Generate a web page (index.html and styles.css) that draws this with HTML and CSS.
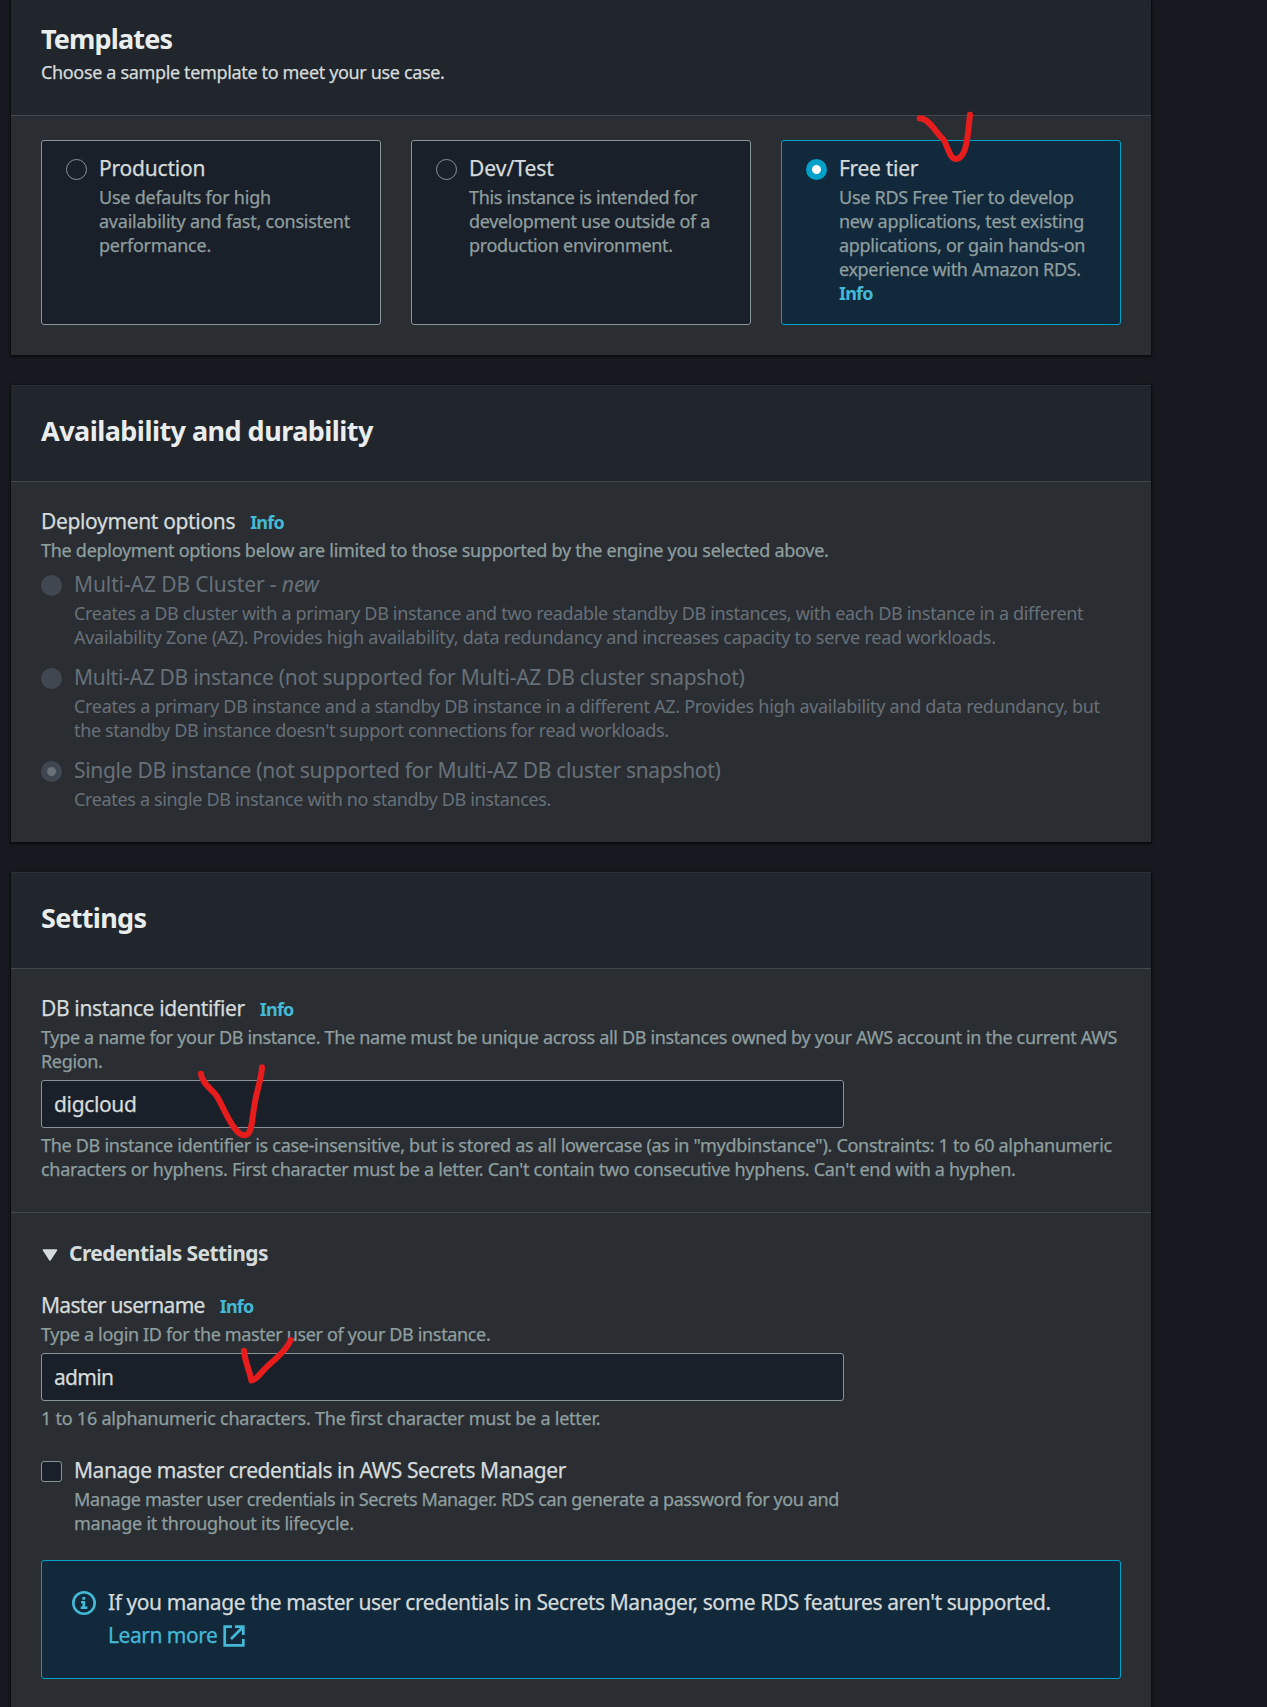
FILE: index.html
```html
<!DOCTYPE html>
<html lang="en">
<head>
<meta charset="utf-8">
<title>Create database</title>
<link rel="stylesheet" href="styles.css">
</head>
<body>
<main class="page">
  <section class="panel panel-first">
    <header class="panel-header">
      <h2 class="t84">Templates</h2>
      <p class="panel-sub t35">Choose a sample template to meet your use case.</p>
    </header>
    <div class="panel-body cards">
      <label class="card">
        <span class="radio"></span>
        <span class="option-text">
          <span class="label t20">Production</span>
          <span class="hint t24">Use defaults for high<br>availability and fast, consistent<br>performance.</span>
        </span>
      </label>
      <label class="card">
        <span class="radio"></span>
        <span class="option-text">
          <span class="label">Dev/Test</span>
          <span class="hint t33">This instance is intended for<br>development use outside of a<br>production environment.</span>
        </span>
      </label>
      <label class="card card-selected">
        <span class="radio radio-on"></span>
        <span class="option-text">
          <span class="label t31">Free tier</span>
          <span class="hint"><span class="t28">Use RDS Free Tier to develop</span><br><span class="t28">new applications, test existing</span><br><span class="t33">applications, or gain hands-on</span><br><span class="t35">experience with Amazon RDS.</span><br><a class="info">Info</a></span>
        </span>
      </label>
    </div>
  </section>

  <section class="panel">
    <header class="panel-header"><h2 class="t54">Availability and durability</h2></header>
    <div class="panel-body">
      <div class="field-head"><span class="label t35">Deployment options</span><a class="info">Info</a></div>
      <p class="hint field-hint t28">The deployment options below are limited to those supported by the engine you selected above.</p>
      <div class="options">
        <label class="option">
          <span class="radio radio-disabled"></span>
          <span class="option-text">
            <span class="label t10">Multi-AZ DB Cluster - <em>new</em></span>
            <span class="hint"><span class="t325">Creates a DB cluster with a primary DB instance and two readable standby DB instances, with each DB instance in a different</span><br><span class="t26">Availability Zone (AZ). Provides high availability, data redundancy and increases capacity to serve read workloads.</span></span>
          </span>
        </label>
        <label class="option">
          <span class="radio radio-disabled"></span>
          <span class="option-text">
            <span class="label t28">Multi-AZ DB instance (not supported for Multi-AZ DB cluster snapshot)</span>
            <span class="hint"><span class="t305">Creates a primary DB instance and a standby DB instance in a different AZ. Provides high availability and data redundancy, but</span><br><span class="t35">the standby DB instance doesn't support connections for read workloads.</span></span>
          </span>
        </label>
        <label class="option">
          <span class="radio radio-disabled radio-disabled-on"></span>
          <span class="option-text">
            <span class="label t31">Single DB instance (not supported for Multi-AZ DB cluster snapshot)</span>
            <span class="hint t35">Creates a single DB instance with no standby DB instances.</span>
          </span>
        </label>
      </div>
    </div>
  </section>

  <section class="panel">
    <header class="panel-header"><h2 class="t66">Settings</h2></header>
    <div class="panel-body">
      <div class="field-head"><span class="label t37">DB instance identifier</span><a class="info">Info</a></div>
      <p class="hint field-hint t335">Type a name for your DB instance. The name must be unique across all DB instances owned by your AWS account in the current AWS<br>Region.</p>
      <input class="input t35" type="text" value="digcloud">
      <p class="hint constraint"><span class="t30">The DB instance identifier is case-insensitive, but is stored as all lowercase (as in "mydbinstance"). Constraints: 1 to 60 alphanumeric</span><br><span class="t305">characters or hyphens. First character must be a letter. Can't contain two consecutive hyphens. Can't end with a hyphen.</span></p>
    </div>
    <div class="panel-body credentials">
      <h3 class="expander">
        <svg class="caret" width="16" height="12" viewBox="0 0 16 12"><path d="M1.5 1h13L8 11z" fill="#d5dbdb" stroke="#d5dbdb" stroke-width="1.6" stroke-linejoin="round"/></svg>
        <span class="t58">Credentials Settings</span>
      </h3>
      <div class="field-head"><span class="label t70">Master username</span><a class="info">Info</a></div>
      <p class="hint field-hint t35">Type a login ID for the master user of your DB instance.</p>
      <input class="input t66" type="text" value="admin">
      <p class="hint constraint t24">1 to 16 alphanumeric characters. The first character must be a letter.</p>
      <label class="option secrets">
        <span class="checkbox"></span>
        <span class="option-text">
          <span class="label t44">Manage master credentials in AWS Secrets Manager</span>
          <span class="hint"><span class="t38">Manage master user credentials in Secrets Manager. RDS can generate a password for you and</span><br><span class="t24">manage it throughout its lifecycle.</span></span>
        </span>
      </label>
      <div class="alert">
        <svg class="alert-icon" width="24" height="24" viewBox="0 0 24 24" fill="#44b9d6"><circle cx="12" cy="12" r="10.7" fill="none" stroke="#44b9d6" stroke-width="2.6"/><path d="M10.4 6.1h2.8v2.6h-2.8zM9 10h4.2v5.6h2.2V18H8.7v-2.4h1.7v-3.3H9z"/></svg>
        <div class="alert-text">
          <div class="t42">If you manage the master user credentials in Secrets Manager, some RDS features aren't supported.</div>
          <a class="learn"><span class="t48">Learn more</span><svg width="22" height="22" viewBox="0 0 22 22" fill="none" stroke="#44b9d6" stroke-width="2.7"><path d="M9 1.7H1.7V20.3H20.3V14M12 1.7H20.3V10M20 2L8 14"/></svg></a>
        </div>
      </div>
    </div>
  </section>

  <svg class="ink" width="1267" height="1707" viewBox="0 0 1267 1707">
    <path d="M919.7 118.3C929 118 936 133 943 139C947 143 949 159 956 159C967 159 968 133 970 114.7"/>
    <path d="M201 1073.7C202 1084 212 1089 217.4 1097C223 1107 228 1120 234.500 1128C238 1133 242 1135.500 245 1135.300C252 1135 252 1119 253.700 1110C256 1091 261 1082 262 1067.300"/>
    <path d="M244 1350.700C245 1363 250 1371 251.300 1380.500C257 1380 261 1372 267 1366.700C274 1359.500 286 1352 290.700 1340"/>
  </svg>
</main>
</body>
</html>
```
FILE: styles.css
```css
* { box-sizing: border-box; }
body {
  margin: 0;
  background: #16191f;
  color: #d5dbdb;
  font: 400 21px/30px "Noto Sans", sans-serif;
  -webkit-text-stroke: .25px currentColor;
}
h2, h3, p { margin: 0; }
.page {
  position: relative;
  display: flex;
  flex-direction: column;
  gap: 30px;
  height: 1707px;
  padding: 0 116px 0 11px;
  overflow: hidden;
}
.panel {
  flex: none;
  background: #2a2e33;
  border-top: 1px solid #2c3036;
  box-shadow: 0 1px 1px 1px rgba(0, 0, 0, .35), 0 1px 5px rgba(0, 0, 0, .4);
}
.panel-first { border-top: 0; }
.panel-header {
  padding: 28px 30px 34px;
  background: #21252c;
  border-bottom: 1px solid #414750;
}
.panel-first .panel-header { padding: 22px 30px 31px; }
.panel-header h2 {
  color: #eaeded;
  font-size: 27px;
  line-height: 33px;
  font-weight: 700;
}
.panel-sub { margin-top: 5px; font-size: 18px; line-height: 24px; }
.panel-body { padding: 24px 30px 31px; }
.cards {
  display: grid;
  grid-template-columns: repeat(3, 1fr);
  gap: 30px;
  padding-bottom: 30px;
}
.card {
  display: flex;
  gap: 12px;
  height: 185px;
  padding: 12px 24px;
  background: #1a2029;
  border: 1px solid #879596;
  border-radius: 3px;
}
.card-selected { background: #12293b; border-color: #00a1c9; }
.option-text { white-space: nowrap; }
.label, .hint { display: block; }
.hint { color: #8f9e9f; font-size: 18px; line-height: 24px; white-space: nowrap; }
.option-text .hint { margin-top: 2px; }
.info {
  color: #44b9d6;
  font-size: 18px;
  line-height: 24px;
  font-weight: 700;
  letter-spacing: -.8px;
  -webkit-text-stroke: 0;
}

.radio {
  flex: none;
  width: 21px;
  height: 21px;
  margin-top: 6px;
  border: 1.5px solid #879596;
  border-radius: 50%;
}
.radio-on { border: 6px solid #00a1c9; background: #fff; }
.radio-disabled { border: 0; background: #414750; }
.radio-disabled-on { border: 6px solid #414750; background: #687078; }
.checkbox {
  flex: none;
  width: 21px;
  height: 21px;
  margin-top: 6px;
  background: #1a2029;
  border: 1px solid #879596;
  border-radius: 3px;
}

.field-head { display: flex; align-items: baseline; gap: 15px; height: 30px; }
.field-hint { margin-top: 2px; }
.options { display: flex; flex-direction: column; gap: 13px; margin-top: 7px; -webkit-text-stroke: 0; }
.option { display: flex; gap: 12px; }
.options .label, .options .hint { color: #687078; }
.input {
  display: block;
  width: 803px;
  height: 48px;
  margin-top: 7px;
  padding: 0 12px 1px;
  background: #1a2029;
  border: 1px solid #879596;
  border-radius: 3px;
  color: #d5dbdb;
  font: inherit;
}
.constraint { margin-top: 5px; }

.credentials { padding-top: 25px; border-top: 1px solid #414750; }
.expander {
  display: flex;
  align-items: center;
  gap: 11px;
  margin-bottom: 22px;
  font-size: 21px;
  line-height: 30px;
  font-weight: 700;
}
.panel-header h2, .expander { -webkit-text-stroke: 0; }
.caret { margin: 4px 0 0 1px; }
.secrets { margin-top: 25px; }

.alert {
  display: flex;
  gap: 12px;
  height: 119px;
  margin-top: 25px;
  padding: 25px 30px 23px;
  background: #12293b;
  border: 1px solid #00a1c9;
  border-radius: 3px;
  line-height: 33px;
  white-space: nowrap;
}
.alert-icon { flex: none; margin-top: 5px; }
.learn { display: flex; align-items: center; gap: 6px; color: #44b9d6; }
.learn svg { margin-top: 1px; }

/* Hand-drawn check marks over the form */
.ink { position: absolute; left: 0; top: 0; pointer-events: none; }
.ink path {
  fill: none;
  stroke: #e71d1d;
  stroke-width: 6;
  stroke-linecap: round;
  stroke-linejoin: round;
}

/* Tracking steps */
.t10 { letter-spacing: -.1px; }
.t20 { letter-spacing: -.2px; }
.t24 { letter-spacing: -.238px; }
.t26 { letter-spacing: -.263px; }
.t28 { letter-spacing: -.28px; }
.t30 { letter-spacing: -.298px; }
.t305 { letter-spacing: -.304px; }
.t31 { letter-spacing: -.31px; }
.t325 { letter-spacing: -.324px; }
.t33 { letter-spacing: -.33px; }
.t335 { letter-spacing: -.333px; }
.t35 { letter-spacing: -.346px; }
.t37 { letter-spacing: -.37px; }
.t38 { letter-spacing: -.38px; }
.t42 { letter-spacing: -.422px; }
.t44 { letter-spacing: -.44px; }
.t48 { letter-spacing: -.48px; }
.t54 { letter-spacing: -.54px; }
.t58 { letter-spacing: -.59px; }
.t66 { letter-spacing: -.665px; }
.t70 { letter-spacing: -.7px; }
.t84 { letter-spacing: -.844px; }
```
